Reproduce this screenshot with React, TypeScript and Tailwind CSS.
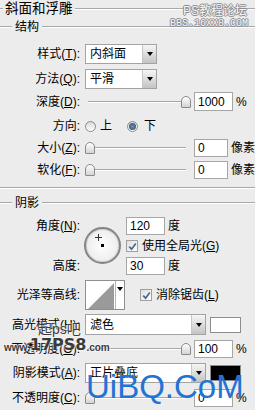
import React from 'react';

const Etch = () => (
  <div className="flex flex-col">
    <div className="h-px bg-[#a8a8a8]" />
    <div className="h-px bg-white" />
  </div>
);

const GroupHeader = ({ title }: { title: string }) => (
  <div className="flex items-center h-[14px]">
    <div className="w-[12px]"><Etch /></div>
    <span className="px-[3px] text-[12px] leading-none">{title}</span>
    <div className="flex-1"><Etch /></div>
  </div>
);

const Label = ({ children }: { children: React.ReactNode }) => (
  <div className="w-[80px] shrink-0 text-right text-[12px] leading-none whitespace-nowrap">{children}</div>
);

const Arrow = () => (
  <div className="w-0 h-0 border-x-[3px] border-x-transparent border-t-[4px] border-t-black" />
);

const Select = ({ value, className }: { value: string; className: string }) => (
  <div className={`flex h-full border border-[#a3a3a3] bg-white ${className}`}>
    <div className="flex-1 flex items-center pl-[4px] text-[12px] leading-none">{value}</div>
    <div className="w-[14px] border-l border-[#c6c6c6] bg-linear-to-b from-[#f6f6f6] to-[#c4c4c4] flex items-center justify-center">
      <Arrow />
    </div>
  </div>
);

const Field = ({ value }: { value: string }) => (
  <div className="w-[39px] h-full border border-[#a6a6a6] bg-white flex items-center pl-[3px] text-[12px] leading-none">
    {value}
  </div>
);

const Thumb = () => (
  <div className="w-[10px] h-[12px] rounded-t-[5px] rounded-b-[1px] border border-[#8a8a8a] bg-linear-to-b from-white to-[#d4d4d4]" />
);

const Slider = ({ atEnd }: { atEnd?: boolean }) => (
  <div className="relative w-[109px] h-full flex items-center">
    <div className="ml-[3px] w-[98px]"><Etch /></div>
    <div className={`absolute top-1/2 -translate-y-1/2 ${atEnd ? 'left-[96px]' : 'left-0'}`}>
      <Thumb />
    </div>
  </div>
);

const Radio = ({ checked }: { checked?: boolean }) => (
  <div className="w-[11px] h-[11px] rounded-full border border-[#8a8a8a] bg-linear-to-b from-[#d9d9d9] to-white flex items-center justify-center">
    {checked && <div className="w-[7px] h-[7px] rounded-full bg-radial from-[#6f8fb3] to-[#26466a]" />}
  </div>
);

const Check = () => (
  <div className="w-[12px] h-[12px] border border-[#9f9f9f] bg-linear-to-br from-[#dedede] to-white flex items-center justify-center">
    <svg width="9" height="9" viewBox="0 0 9 9">
      <path d="M1.2 4.6 L3.6 7.2 L7.8 1.4" stroke="#4a6894" strokeWidth="1.7" fill="none" />
    </svg>
  </div>
);

const Swatch = ({ className }: { className: string }) => (
  <div className={`w-[31px] h-[16px] border border-[#8d8d8d] ${className}`} />
);

const SliderRow = ({ label, value, unit, atEnd, className }: { label: React.ReactNode; value: string; unit: string; atEnd?: boolean; className: string }) => (
  <div className={`flex items-center ${className}`}>
    <Label>{label}</Label>
    <div className="ml-[5px] h-full"><Slider atEnd={atEnd} /></div>
    <Field value={value} />
    <span className="ml-[3px] text-[12px] leading-none whitespace-nowrap">{unit}</span>
  </div>
);

const outline = '[text-shadow:1px_0_0_#8a8a8a,-1px_0_0_#8a8a8a,0_1px_0_#8a8a8a,0_-1px_0_#8a8a8a]';

export default function App() {
  return (
    <div className="relative w-[255px] h-[410px] overflow-hidden bg-[#ececec] text-black font-['Liberation_Sans','Noto_Sans_CJK_SC',sans-serif]">
      {/* 斜面和浮雕 */}
      <div className="flex items-center h-[17px]">
        <div className="w-[3px]"><Etch /></div>
        <span className="px-[2px] text-[13.5px] leading-none">斜面和浮雕</span>
        <div className="flex-1"><Etch /></div>
      </div>

      <div className="mt-[3px]"><GroupHeader title="结构" /></div>

      <div className="mt-[10px] flex items-center h-[20px]">
        <Label>样式(<u>T</u>):</Label>
        <div className="ml-[5px] h-full"><Select value="内斜面" className="w-[72px]" /></div>
      </div>

      <div className="mt-[5px] flex items-center h-[20px]">
        <Label>方法(<u>Q</u>):</Label>
        <div className="ml-[5px] h-full"><Select value="平滑" className="w-[72px]" /></div>
      </div>

      <SliderRow label={<>深度(<u>D</u>):</>} value="1000" unit="%" atEnd className="mt-[3px] h-[19px]" />

      <div className="mt-[9px] flex items-center h-[12px]">
        <Label>方向:</Label>
        <div className="ml-[5px] flex items-center">
          <Radio />
          <span className="ml-[4px] text-[12px] leading-none">上</span>
        </div>
        <div className="ml-[15px] flex items-center">
          <Radio checked />
          <span className="ml-[6px] text-[12px] leading-none">下</span>
        </div>
      </div>

      <SliderRow label={<>大小(<u>Z</u>):</>} value="0" unit="像素" className="mt-[7px] h-[18px]" />
      <SliderRow label={<>软化(<u>F</u>):</>} value="0" unit="像素" className="mt-[4px] h-[18px]" />

      <div className="mt-[8px]"><Etch /></div>

      <div className="mt-[7px]"><GroupHeader title="阴影" /></div>

      {/* 角度 / 高度 */}
      <div className="mt-[7px] flex h-[58px]">
        <div className="w-[80px] flex flex-col">
          <div className="h-[18px] flex items-center justify-end"><Label>角度(<u>N</u>):</Label></div>
          <div className="mt-[22px] h-[18px] flex items-center justify-end"><Label>高度:</Label></div>
        </div>
        <div className="ml-[4px] w-[38px] pt-[10px]">
          <div className="relative w-[37px] h-[37px] rounded-full border-2 border-[#858585] bg-radial from-white to-[#e6e6e6] shadow-[inset_0_0_0_1px_#d0d0d0]">
            <svg className="absolute left-[9px] top-[5px]" width="7" height="7" viewBox="0 0 7 7">
              <path d="M3.5 0 V7 M0 3.5 H7" stroke="#333" strokeWidth="1" />
            </svg>
            <div className="absolute left-[15px] top-[15px] w-[3px] h-[3px] bg-black" />
          </div>
        </div>
        <div className="ml-[4px] flex flex-col">
          <div className="h-[18px] flex items-center">
            <Field value="120" />
            <span className="ml-[3px] text-[12px] leading-none">度</span>
          </div>
          <div className="mt-[4px] h-[14px] flex items-center">
            <Check />
            <span className="ml-[4px] text-[12px] leading-none whitespace-nowrap">使用全局光(<u>G</u>)</span>
          </div>
          <div className="mt-[4px] h-[18px] flex items-center">
            <Field value="30" />
            <span className="ml-[3px] text-[12px] leading-none">度</span>
          </div>
        </div>
      </div>

      {/* 光泽等高线 */}
      <div className="mt-[5px] flex items-center h-[30px]">
        <Label>光泽等高线:</Label>
        <div className="ml-[5px] h-full flex border border-[#8f8f8f] bg-white">
          <svg width="29" height="28" viewBox="0 0 29 28">
            <polygon points="2,28 28,2 28,28" fill="#9a9a9a" />
          </svg>
          <div className="w-[9px] border-l border-[#b5b5b5] flex justify-center pt-[6px]">
            <Arrow />
          </div>
        </div>
        <div className="ml-[15px] flex items-center">
          <Check />
          <span className="ml-[4px] text-[12px] leading-none whitespace-nowrap">消除锯齿(<u>L</u>)</span>
        </div>
      </div>

      <div className="mt-[4px] flex items-center h-[21px]">
        <Label>高光模式(<u>H</u>):</Label>
        <div className="ml-[5px] h-full"><Select value="滤色" className="w-[121px]" /></div>
        <div className="ml-[4px]"><Swatch className="bg-white" /></div>
      </div>

      <SliderRow label={<>不透明度(<u>O</u>):</>} value="100" unit="%" atEnd className="mt-[5px] h-[18px]" />

      <div className="mt-[5px] flex items-center h-[20px]">
        <Label>阴影模式(<u>A</u>):</Label>
        <div className="ml-[5px] h-full"><Select value="正片叠底" className="w-[121px]" /></div>
        <div className="ml-[4px]"><Swatch className="bg-black" /></div>
      </div>

      <SliderRow label={<>不透明度(<u>C</u>):</>} value="0" unit="%" className="mt-[6px] h-[18px]" />

      {/* watermarks */}
      <div className={`absolute left-[183px] top-[5px] text-[12px] leading-none text-[#f7f7f7] ${outline}`}>PS教程论坛</div>
      <div className={`absolute left-[170px] top-[19px] text-[10px] leading-none text-[#f7f7f7] font-['Liberation_Mono',monospace] ${outline}`}>BBS.16XX8.COM</div>
      <div className="absolute left-[38px] top-[322px] text-[14px] leading-none text-[#3c3c3c] [text-shadow:0_0_2px_#fff,0_0_2px_#fff]">起ps吧</div>
      <div className="absolute left-[4px] top-[337px] flex items-end leading-none text-[#3a3a3a] [text-shadow:0_0_2px_#fff,0_0_2px_#fff]">
        <span className="text-[10px] font-bold">www.</span>
        <span className="text-[16px] font-bold font-['DejaVu_Sans',sans-serif]">17PS8</span>
        <span className="text-[10px] font-bold">.com</span>
      </div>
      <div className="absolute left-[86px] top-[370px] text-[33px] leading-none text-[#2273d3]">UiBQ.CoM</div>
    </div>
  );
}
